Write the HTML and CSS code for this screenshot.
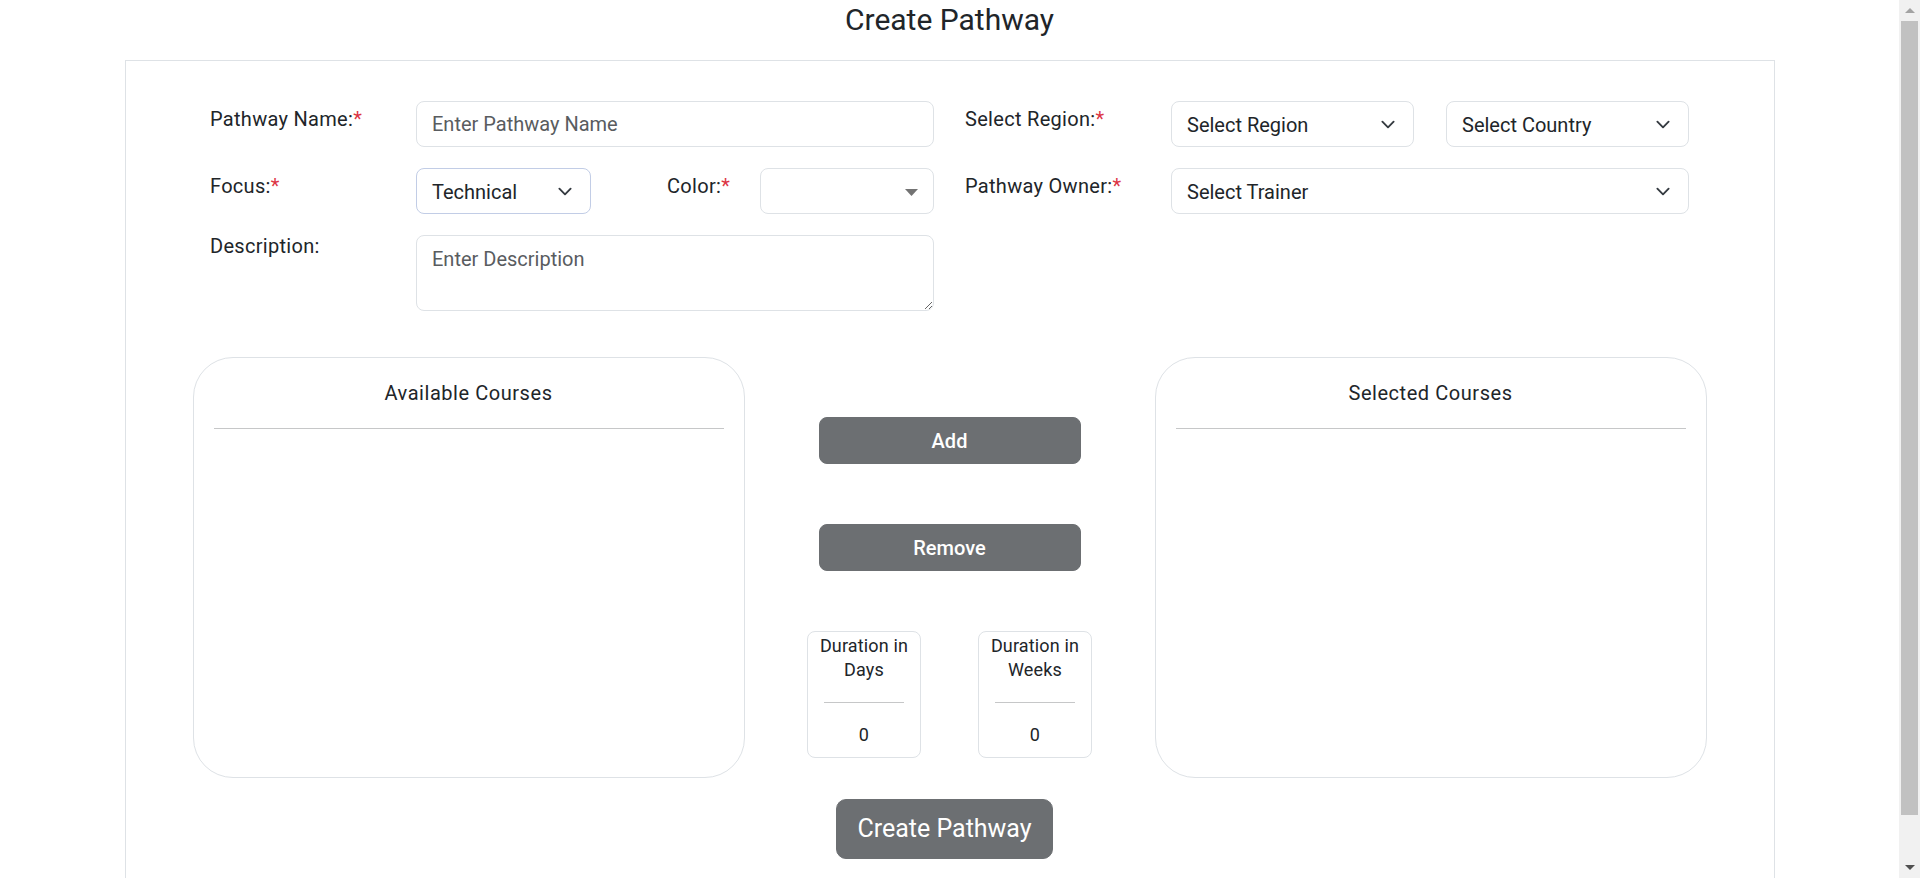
FILE: index.html
```html
<!DOCTYPE html>
<html lang="en">
<head>
<meta charset="utf-8">
<title>Create Pathway</title>
<link rel="stylesheet" href="styles.css">
</head>
<body>
<h1 class="page-title">Create Pathway</h1>
<div class="card">
  <div class="form-top">
    <div class="form-col">
      <div class="field">
        <label class="field-label">Pathway Name:<span class="req">*</span></label>
        <input class="control" type="text" placeholder="Enter Pathway Name">
      </div>
      <div class="field">
        <label class="field-label">Focus:<span class="req">*</span></label>
        <div class="split">
          <div class="control select select--focus">
            <span class="select-value">Technical</span>
            <svg class="chevron" width="20" height="15" viewBox="0 0 16 16"><path d="m2 5 6 6 6-6" fill="none" stroke="#343a40" stroke-width="2" stroke-linecap="round" stroke-linejoin="round"/></svg>
          </div>
          <label class="field-label inline-label">Color:<span class="req">*</span></label>
          <div class="control select">
            <span class="select-value"></span>
            <svg class="caret" width="13" height="7" viewBox="0 0 13 7"><path d="M0 0h13L6.5 7z" fill="#737373"/></svg>
          </div>
        </div>
      </div>
      <div class="field">
        <label class="field-label label-desc">Description:</label>
        <textarea class="control textarea" placeholder="Enter Description"></textarea>
      </div>
    </div>
    <div class="form-col">
      <div class="field">
        <label class="field-label">Select Region:<span class="req">*</span></label>
        <div class="pair">
          <div class="control select">
            <span class="select-value">Select Region</span>
            <svg class="chevron" width="20" height="15" viewBox="0 0 16 16"><path d="m2 5 6 6 6-6" fill="none" stroke="#343a40" stroke-width="2" stroke-linecap="round" stroke-linejoin="round"/></svg>
          </div>
          <div class="control select">
            <span class="select-value">Select Country</span>
            <svg class="chevron" width="20" height="15" viewBox="0 0 16 16"><path d="m2 5 6 6 6-6" fill="none" stroke="#343a40" stroke-width="2" stroke-linecap="round" stroke-linejoin="round"/></svg>
          </div>
        </div>
      </div>
      <div class="field">
        <label class="field-label">Pathway Owner:<span class="req">*</span></label>
        <div class="control select">
          <span class="select-value">Select Trainer</span>
          <svg class="chevron" width="20" height="15" viewBox="0 0 16 16"><path d="m2 5 6 6 6-6" fill="none" stroke="#343a40" stroke-width="2" stroke-linecap="round" stroke-linejoin="round"/></svg>
        </div>
      </div>
    </div>
  </div>

  <div class="courses">
    <div class="course-box">
      <div class="course-title">Available Courses</div>
      <hr class="rule">
    </div>
    <div class="course-actions">
      <button class="btn btn-wide" type="button">Add</button>
      <button class="btn btn-wide" type="button">Remove</button>
      <div class="durations">
        <div class="duration">
          <div class="duration-label">Duration in Days</div>
          <hr class="rule rule--small">
          <div class="duration-value">0</div>
        </div>
        <div class="duration">
          <div class="duration-label">Duration in Weeks</div>
          <hr class="rule rule--small">
          <div class="duration-value">0</div>
        </div>
      </div>
    </div>
    <div class="course-box">
      <div class="course-title">Selected Courses</div>
      <hr class="rule">
    </div>
  </div>

  <div class="submit-row">
    <button class="btn btn-lg" type="button">Create Pathway</button>
  </div>
</div>

<div class="scrollbar" aria-hidden="true">
  <div class="scroll-btn">
    <svg width="10" height="5" viewBox="0 0 10 5"><path d="M0 5L5 0L10 5z" fill="#a3a3a3"/></svg>
  </div>
  <div class="scroll-track">
    <div class="scroll-thumb"></div>
  </div>
  <div class="scroll-btn">
    <svg width="10" height="5" viewBox="0 0 10 5"><path d="M0 0h10L5 5z" fill="#505050"/></svg>
  </div>
</div>
</body>
</html>
```

FILE: styles.css
```css
html {
  scrollbar-width: none;
}
html::-webkit-scrollbar,
body::-webkit-scrollbar {
  display: none;
}

html, body {
  padding: 0;
  background: #ffffff;
}

body {
  margin: 0 21px 0 0;
  font-family: Roboto, "Liberation Sans", Arial, sans-serif;
  color: #212529;
  font-size: 20px;
  line-height: 30px;
}

.page-title {
  margin: 2px 0 22px;
  font-size: 30px;
  line-height: 36px;
  font-weight: 400;
  text-align: center;
}

.card {
  box-sizing: border-box;
  width: 1650px;
  margin: 0 auto 34px;
  border: 1px solid #dee2e6;
  padding: 40px 0 30px;
}

.form-top {
  width: 1479px;
  margin: 0 auto;
  display: grid;
  grid-template-columns: 724px 724px;
  column-gap: 31px;
  align-items: start;
}

.form-col {
  display: flex;
  flex-direction: column;
  gap: 21px;
}

.field {
  display: grid;
  grid-template-columns: 206px 518px;
  align-items: start;
}

.field-label {
  padding-top: 3px;
  font-size: 20px;
  line-height: 30px;
  letter-spacing: 0.3px;
  white-space: nowrap;
}

.label-desc {
  padding-top: 0;
  margin-top: -4px;
}

.req {
  color: #dc3545;
}

.control {
  box-sizing: border-box;
  height: 46px;
  width: 100%;
  margin: 0;
  border: 1px solid #dee2e6;
  border-radius: 8px;
  background: #fff;
  padding: 7px 15px;
  font-family: inherit;
  font-size: 20px;
  line-height: 30px;
  color: #212529;
  outline: none;
}

.control::placeholder {
  color: #595c5f;
}

.textarea {
  height: 76px;
  display: block;
  resize: both;
  padding-top: 8px;
}

.select {
  display: flex;
  align-items: center;
  justify-content: space-between;
}

.select--focus {
  border-color: #c2cde6;
}

.select-value {
  white-space: nowrap;
  padding-top: 1px;
}

.chevron {
  flex: none;
}

.caret {
  flex: none;
  margin-top: 2px;
}

.split {
  display: grid;
  grid-template-columns: 175px 1fr 174px;
}

.inline-label {
  padding-left: 76px;
}

.pair {
  display: grid;
  grid-template-columns: 1fr 1fr;
  column-gap: 32px;
}

.courses {
  margin-top: 46px;
  display: flex;
  justify-content: center;
}

.course-box {
  box-sizing: border-box;
  width: 552px;
  height: 421px;
  border: 1px solid #dee2e6;
  border-radius: 40px;
  padding: 20px 20px;
}

.course-title {
  text-align: center;
  font-size: 20px;
  line-height: 30px;
  letter-spacing: 0.55px;
}

.rule {
  margin: 20px 0 0;
  border: 0;
  border-top: 1px solid #c6c7c8;
  height: 0;
}

.course-actions {
  width: 410px;
  display: flex;
  flex-direction: column;
  align-items: center;
  padding-top: 60px;
  gap: 60px;
}

.btn {
  box-sizing: border-box;
  border: 1px solid #6c6f72;
  background: #6c6f72;
  color: #ffffff;
  font-family: inherit;
  font-size: 20px;
  line-height: 30px;
  padding: 7px 15px;
  border-radius: 8px;
  cursor: pointer;
}

.btn-wide {
  width: 262px;
  height: 47px;
  font-weight: 500;
}

.btn-lg {
  font-size: 25px;
  line-height: 37.5px;
  padding: 10px 20px;
  border-radius: 10px;
  height: 60px;
}

.durations {
  display: flex;
  gap: 57px;
}

.duration {
  box-sizing: border-box;
  width: 114px;
  height: 127px;
  border: 1px solid #dee2e6;
  border-radius: 8px;
  padding: 2px 4px 10px;
  text-align: center;
  font-size: 18px;
  line-height: 24px;
  letter-spacing: 0.15px;
}

.rule--small {
  margin: 20px 12px;
}

.submit-row {
  display: flex;
  justify-content: center;
  margin-top: 21px;
  padding-right: 10px;
}

.scrollbar {
  position: fixed;
  top: 0;
  right: 0;
  width: 21px;
  height: 100vh;
  background: #f1f1f1;
  display: flex;
  flex-direction: column;
}

.scroll-btn {
  height: 21px;
  flex: none;
  display: flex;
  align-items: center;
  justify-content: center;
}

.scroll-track {
  flex: 1;
  padding: 0 2px;
}

.scroll-thumb {
  height: 794px;
  background: #c1c1c1;
}
```
